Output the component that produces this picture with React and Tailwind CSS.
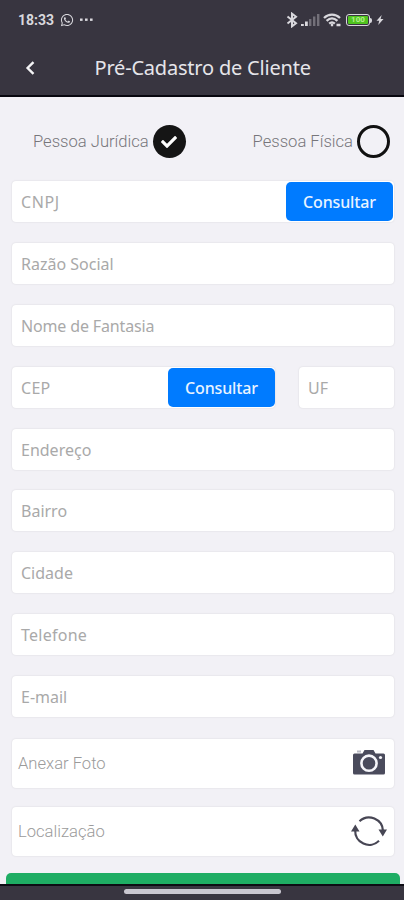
import React, { useState } from 'react';
import { FaWhatsapp, FaCheck } from 'react-icons/fa';

const FIELDS_TOP = [
  { label: 'Razão Social' },
  { label: 'Nome de Fantasia', tracking: 'tracking-[-0.15px]' },
];

const FIELDS_BOTTOM = [
  { label: 'Endereço' },
  { label: 'Bairro' },
  { label: 'Cidade' },
  { label: 'Telefone', tracking: 'tracking-[0.25px]' },
  { label: 'E-mail' },
];

function StatusBar() {
  return (
    <div className="flex h-[40px] items-center justify-between pl-[18px] pr-[20px] text-[#d9d8dd]">
      <div className="flex items-center">
        <span className="w-[36px] font-['Roboto',sans-serif] text-[14px] font-bold leading-none">18:33</span>
        <FaWhatsapp className="ml-[6px] size-[14px]" />
        <svg className="ml-[6px] h-[4px] w-[13px]" viewBox="0 0 13 4" fill="currentColor">
          <rect x="0" y="0.5" width="2.6" height="2.4" />
          <rect x="5" y="0.5" width="2.6" height="2.4" />
          <rect x="10" y="0.5" width="2.6" height="2.4" />
        </svg>
      </div>
      <div className="flex items-center">
        <svg className="h-[16px] w-[12px]" viewBox="0 0 12 16" fill="none" stroke="currentColor" strokeWidth="2">
          <path d="M1.500 4.500 10 11.200 6 14.300V1.700L10 4.800 1.500 11.500" />
        </svg>
        {/* sinal */}
        <svg className="ml-[3px] h-[14px] w-[20px]" viewBox="0 0 20 14">
          <rect x="0" y="11" width="2.8" height="2" fill="#d9d8dd" />
          <rect x="4" y="8.500" width="2.8" height="4.500" fill="#d9d8dd" />
          <rect x="8" y="6" width="2.4" height="7" fill="#737079" />
          <rect x="12" y="3.500" width="2.4" height="9.500" fill="#737079" />
          <rect x="16" y="1" width="2.4" height="12" fill="#737079" />
        </svg>
        <svg className="ml-[2px] h-[14px] w-[19px]" viewBox="0 0 19 14" fill="none" stroke="currentColor" strokeWidth="2.3">
          <path d="M1 5C5.600.6 12.400.6 17 5" />
          <path d="M3.600 7.900C7 4.700 11 4.700 14.400 7.900" />
          <path d="M6.200 10.600C8 9 10 9 11.800 10.600" />
          <path d="M9 10.500v2.800M13.500 12h4" />
        </svg>
        {/* bateria */}
        <div className="ml-[4px] flex items-center">
          <div className="flex h-[12px] w-[24px] rounded-[3px] border border-[#d9d8dd] p-px">
            <span className="flex-1 rounded-[1px] bg-[#4fc41f] text-center font-['Roboto',sans-serif] text-[8px] font-bold leading-[8px] text-[#b4ee8c]">100</span>
          </div>
          <div className="h-[5px] w-[2px] rounded-r-sm bg-[#d9d8dd]" />
        </div>
        <svg className="ml-[4px] h-[12px] w-[8px]" viewBox="0 0 8 12" fill="currentColor">
          <path d="M5.700 1 .5 6.800h2.700L2.200 11 7.500 5H4.600z" />
        </svg>
      </div>
    </div>
  );
}

function Header() {
  return (
    <header className="h-[97px] border-b-2 border-[#08070f] bg-[#383540]">
      <StatusBar />
      <div className="flex h-[55px] items-center">
        <svg className="ml-[25px] h-[16px] w-[12px]" viewBox="0 0 12 16" fill="none" stroke="#f4f4f6" strokeWidth="2.4">
          <path d="M8.500 2.200 2.600 8l5.900 5.800" />
        </svg>
        <h1 className="ml-[57.5px] whitespace-nowrap font-['Noto_Sans',sans-serif] text-[20px] leading-none tracking-[-0.2px] text-[#e6e5ea]">
          Pré-Cadastro de Cliente
        </h1>
      </div>
    </header>
  );
}

function Field({ label, tracking = '', className = '', children }) {
  return (
    <div className={`flex h-[41px] items-center justify-between rounded-[4px] bg-white pl-[9px] shadow-[0_0_2px_rgba(0,0,0,0.12)] ${className}`}>
      <span className={`whitespace-nowrap pt-px font-['Noto_Sans',sans-serif] text-[16px] leading-none text-[#a9a9a9] ${tracking}`}>{label}</span>
      {children}
    </div>
  );
}

function ConsultarButton() {
  return (
    <button className="h-[39px] w-[107px] rounded-[5px] bg-[#007bff] pt-px font-['Noto_Sans',sans-serif] text-[16px] font-medium leading-none tracking-[-0.15px] text-[#e8f3ff]">
      Consultar
    </button>
  );
}

function PickerRow({ label, children }) {
  return (
    <div className="flex h-[49px] items-center justify-between rounded-[4px] bg-white pl-[6px] pr-[8px] shadow-[0_0_2px_rgba(0,0,0,0.12)]">
      <span className="pt-[2px] font-['Roboto',sans-serif] text-[16.6px] font-light leading-none text-[#9b9b9b]">{label}</span>
      {children}
    </div>
  );
}

function CameraIcon() {
  return (
    <svg className="mb-[3px] h-[26px] w-[34px]" viewBox="0 0 34 26">
      <path d="M2.500 4.500h8L12.500 1h9L23.500 4.500h8q1.500 0 1.500 1.500v18q0 1.500-1.500 1.500h-29Q1 25.500 1 24V6q0-1.500 1.500-1.500z" fill="#4a4b5c" />
      <rect x="5" y="1.500" width="4" height="2" fill="#b9bac4" />
      <circle cx="17" cy="14.200" r="7.600" fill="#4a4b5c" stroke="#f6f6fa" strokeWidth="2.6" />
      <circle cx="28.500" cy="8.500" r="1.600" fill="#f6f6fa" />
    </svg>
  );
}

function RefreshIcon() {
  return (
    <svg className="-mr-px h-[32px] w-[36px]" viewBox="0 0 36 32" fill="none" stroke="#474654" strokeWidth="2.2">
      <path d="M8.500 6.200A14 14 0 0 1 32 16" />
      <path d="M28 25.800A14 14 0 0 1 4.200 15" />
      <path d="M27.500 14.500H36l-4.200 7zM0 16.500h8.500l-4.200-7z" fill="#474654" stroke="none" />
    </svg>
  );
}

export default function App() {
  const [tipo, setTipo] = useState('juridica');

  return (
    <div className="flex h-[900px] w-[404px] flex-col overflow-hidden bg-[#f2f1f6]">
      <Header />

      <main className="flex flex-1 flex-col overflow-hidden">
        <div className="flex h-[84px] shrink-0 items-center justify-between pl-[33px] pr-[14px] pt-[5px] font-['Roboto',sans-serif] text-[16.6px] font-light text-[#77767b]">
          {[
            ['juridica', 'Pessoa Jurídica'],
            ['fisica', 'Pessoa Física'],
          ].map(([key, label]) => (
            <button key={key} onClick={() => setTipo(key)} className="flex items-center gap-[4px]">
              <span className="whitespace-nowrap pt-[2px]">{label}</span>
              {tipo === key ? (
                <span className="flex size-[33px] items-center justify-center rounded-full bg-[#151515] text-white">
                  <FaCheck className="size-[16px]" />
                </span>
              ) : (
                <span className="size-[33px] rounded-full border-3 border-[#111]" />
              )}
            </button>
          ))}
        </div>

        <div className="flex shrink-0 flex-col gap-[20.9px] pl-[12px] pr-[10px]">
          <Field label="CNPJ" tracking="tracking-[0.6px]" className="pr-[1px]">
            <ConsultarButton />
          </Field>
          {FIELDS_TOP.map((f) => (
            <Field key={f.label} {...f} />
          ))}
          <div className="flex gap-[24px]">
            <Field label="CEP" tracking="tracking-[0.3px]" className="w-[263px]">
              <ConsultarButton />
            </Field>
            <Field label="UF" className="flex-1" />
          </div>
          {FIELDS_BOTTOM.map((f) => (
            <Field key={f.label} {...f} />
          ))}
        </div>

        <div className="mt-[21.5px] flex shrink-0 flex-col gap-[19px] pl-[12px] pr-[10px]">
          <PickerRow label="Anexar Foto">
            <CameraIcon />
          </PickerRow>
          <PickerRow label="Localização">
            <RefreshIcon />
          </PickerRow>
        </div>

        <div className="mt-[17px] h-[40px] shrink-0 pl-[6px] pr-[4px]">
          <div className="h-full rounded-[5px] bg-[#1fad64]" />
        </div>
      </main>

      {/* barra de navegação do sistema */}
      <footer className="flex h-[16px] shrink-0 justify-center border-t-2 border-[#0d0c14] bg-[#383540] pt-[3px]">
        <div className="h-[5px] w-[157px] rounded-full bg-[#c9c7d0]" />
      </footer>
    </div>
  );
}
